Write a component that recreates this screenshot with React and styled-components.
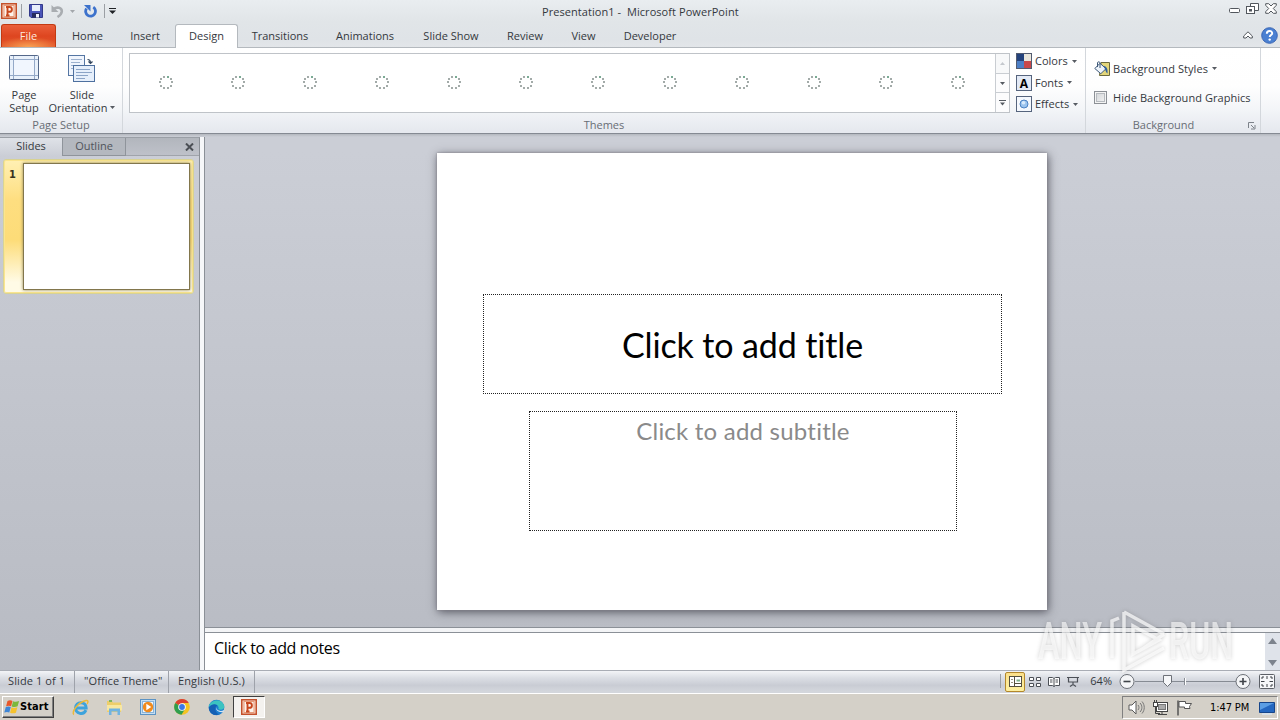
import React from 'react'
import styled, { createGlobalStyle, css } from 'styled-components'

const GlobalStyle = createGlobalStyle`
  * {
    box-sizing: border-box;
  }
  body {
    margin: 0;
    overflow: hidden;
    font-family: 'Open Sans', 'Noto Sans', sans-serif;
    font-size: 11px;
    color: #34383d;
  }
  svg {
    display: block;
    flex: none;
  }
`

const Window = styled.div`
  position: relative;
  width: 1280px;
  height: 720px;
  display: flex;
  flex-direction: column;
  overflow: hidden;
`

const Label = styled.span`
  white-space: pre;
  line-height: 14px;
`

/* ---------- header ---------- */
const Header = styled.header`
  height: 48px;
  flex: none;
  background: linear-gradient(#e9edf0 0%, #e1e5e8 45%, #dfe3e7 85%, #e3e6e9 100%);
  border-bottom: 1px solid #b4b9be;
`

const TitleBar = styled.div`
  height: 24px;
  display: grid;
  grid-template-columns: 542px 1fr auto;
`

const QuickAccess = styled.div`
  display: flex;
  align-items: center;
  height: 22px;
  padding-left: 1px;
`

const TitleText = styled(Label)`
  padding-top: 5px;
  letter-spacing: 0.06px;
`

const WindowButtons = styled.div`
  display: flex;
  gap: 6px;
  padding: 3px 3px 0 0;
`

const TabBar = styled.nav`
  height: 24px;
  display: flex;
  align-items: stretch;
  padding-left: 1px;
`

const Tab = styled.div`
  width: ${(p) => p.$w}px;
  height: 23px;
  padding-top: 5px;
  display: flex;
  justify-content: center;
  ${(p) =>
    p.$file &&
    css`
      color: #ffe9df;
      border: 1px solid #c23a12;
      border-bottom: 0;
      border-radius: 3px 3px 0 0;
      padding-top: 4px;
      background: radial-gradient(ellipse 32px 10px at 50% 100%, #f9a254 0%, rgba(249, 140, 70, 0) 100%),
        linear-gradient(#ea5f3a, #de4620 50%, #e2572c);
    `}
  ${(p) =>
    p.$active &&
    css`
      height: 24px;
      margin-left: 4px;
      padding-top: 4px;
      background: #fff;
      border: 1px solid #b4b9be;
      border-bottom: 0;
      border-radius: 3px 3px 0 0;
    `}
`

const TabTools = styled.div`
  display: flex;
  align-items: center;
  gap: 8px;
  margin-left: auto;
  padding: 0 2px 2px 0;
`

/* ---------- ribbon ---------- */
const Ribbon = styled.section`
  height: 86px;
  flex: none;
  display: flex;
  background: linear-gradient(#fff 0%, #fefefe 45%, #f3f5f8 72%, #e6e9ef 97%);
  border-bottom: 1px solid #858a93;
`

const Group = styled.div`
  width: ${(p) => p.$w}px;
  display: flex;
  flex-direction: column;
  border-right: 1px solid #d3d7dc;
`

const GroupBody = styled.div`
  height: 70px;
  display: flex;
`

const GroupTitle = styled.div`
  position: relative;
  height: 15px;
  display: flex;
  justify-content: center;
  padding-right: ${(p) => p.$pr || 0}px;
  color: #686d75;
`

const Launcher = styled.svg`
  position: absolute;
  right: 4px;
  top: 4px;
`

const BigButton = styled.div`
  width: ${(p) => p.$w}px;
  padding-top: 5px;
  display: flex;
  flex-direction: column;
  align-items: center;

  svg {
    margin-bottom: 6px;
  }
  span {
    line-height: 13px;
  }
`

const WithArrow = styled.div`
  display: flex;
  align-items: center;
  gap: ${(p) => p.$gap || 4}px;

  svg {
    margin: 0;
  }
`

const Gallery = styled.div`
  width: 881px;
  height: 60px;
  margin: 5px 0 0 6px;
  display: flex;
  background: #fff;
  border: 1px solid #bfc3c8;
`

const Themes = styled.div`
  flex: 1;
  display: flex;
  align-items: center;
`

const ThemeSlot = styled.div`
  width: 72px;
  display: flex;
  justify-content: center;
`

const GalleryScroll = styled.div`
  width: 14px;
  display: flex;
  flex-direction: column;
  border-left: 1px solid #c9cdd2;
`

const ScrollCell = styled.div`
  flex: 1;
  display: flex;
  align-items: center;
  justify-content: center;
  background: ${(p) => (p.$dim ? '#f7f8f9' : '#fcfcfd')};

  & + & {
    border-top: 1px solid #c9cdd2;
  }
`

const SmallList = styled.div`
  display: flex;
  flex-direction: column;
  padding: 5px 0 0 6px;
`

const SmallButton = styled.div`
  height: 22px;
  display: flex;
  align-items: flex-start;
  gap: 3px;

  ${WithArrow} {
    height: 16px;
  }
`

const BackgroundList = styled.div`
  padding: 13px 0 0 8px;
  display: flex;
  flex-direction: column;
  gap: 14px;
`

const BackgroundRow = styled.div`
  display: flex;
  align-items: center;
  height: 15px;
  gap: ${(p) => p.$gap}px;
  letter-spacing: 0.05px;
`

const CheckBox = styled.div`
  width: 13px;
  height: 13px;
  background: linear-gradient(135deg, #cfd2d6, #f6f6f6);
  border: 1px solid #8c9096;
  box-shadow: inset 0 0 0 1px #f4f4f4, inset 0 0 0 2px #b6babf;
`

/* ---------- workspace ---------- */
const Workspace = styled.main`
  height: 536px;
  flex: none;
  display: flex;
  padding-top: 3px;
  background: linear-gradient(#b4b8bf, #cbced6 3px, #cbced6 18px, #b8bbc3);
`

const SidePane = styled.aside`
  width: 200px;
  border-top: 1px solid #9a9fa6;
  border-right: 1px solid #8b9097;
`

const PaneTabs = styled.div`
  height: 18px;
  display: flex;
`

const PaneTab = styled.div`
  width: ${(p) => p.$w}px;
  height: 18px;
  display: flex;
  justify-content: center;
  padding-top: 1px;
  ${(p) =>
    p.$active
      ? css`
          background: linear-gradient(#dfe2e8, #cbced6);
        `
      : css`
          color: #50545b;
          background: #b4b8bf;
          border: 1px solid #8f949b;
          border-top: 0;
        `}
`

const PaneRest = styled.div`
  flex: 1;
  display: flex;
  justify-content: flex-end;
  align-items: center;
  padding-right: 5px;
  background: linear-gradient(#b2b6bd, #bec1c9);
  border-bottom: 1px solid #a0a4ab;
`

const ThumbRow = styled.div`
  width: 191px;
  height: 135px;
  margin: 3px 0 0 3px;
  display: flex;
  border: 1px solid #d9d394;
  border-radius: 3px;
  box-shadow: inset 0 0 0 1px #fbe58e;
  background: linear-gradient(#fff0b4 0%, #fede80 30%, #fddc78 60%, #fffbe6 92%);
`

const ThumbNumber = styled.b`
  width: 19px;
  padding: 7px 0 0 5px;
  font: bold 11px/15px 'DejaVu Sans Condensed', sans-serif;
  font-stretch: condensed;
  color: #38321d;
`

const Thumb = styled.div`
  width: 167px;
  height: 127px;
  margin-top: 3px;
  background: #fff;
  border: 1px solid #82764c;
  box-shadow: 0 0 3px #8d8251;
`

const Splitter = styled.div`
  width: 5px;
  background: #f6f7f9;
  border-right: 1px solid #8b9097;
`

const Editor = styled.div`
  flex: 1;
  display: flex;
  flex-direction: column;
`

const Stage = styled.div`
  height: 491px;
  padding: 16px 0 0 232px;
  border-bottom: 1px solid #8b9097;
`

const Slide = styled.div`
  width: 610px;
  height: 457px;
  padding-top: 141px;
  background: #fff;
  box-shadow: 0 0 2px #85838c, 1px 2px 9px rgba(50, 50, 60, 0.75);
  font-family: Lato, Carlito, sans-serif;
  font-variant-ligatures: none;
`

const Placeholder = styled.div`
  display: flex;
  justify-content: center;
  border: 1px dotted #222;
  white-space: pre;
`

const TitleBox = styled(Placeholder)`
  width: 519px;
  height: 100px;
  margin-left: 46px;
  align-items: center;
  font-size: 34px;
  letter-spacing: -0.13px;
  color: #000;
`

const SubtitleBox = styled(Placeholder)`
  width: 428px;
  height: 120px;
  margin: 17px 0 0 92px;
  padding-top: 4px;
  font-size: 24px;
  line-height: 30px;
  letter-spacing: 0.22px;
  color: #8a8a8a;
`

const NotesRow = styled.div`
  flex: 1;
  display: flex;
  margin-top: 4px;
  background: #fff;
  border-top: 1px solid #8b9097;
  box-shadow: 0 -4px 0 #f3f4f6;
`

const Notes = styled.div`
  flex: 1;
  padding: 4px 0 0 9px;
  font-size: 16px;
  line-height: 22px;
  letter-spacing: -0.36px;
  color: #000;
`

const NotesScroll = styled.div`
  width: 15px;
  display: flex;
  flex-direction: column;
  justify-content: space-between;
  align-items: center;
  padding: 5px 0 4px;
  background: #dfe3ea;
`

/* ---------- status bar ---------- */
const StatusBar = styled.footer`
  height: 23px;
  flex: none;
  display: flex;
  align-items: stretch;
  background: linear-gradient(#f3f4f7 0%, #dcdfe5 30%, #c9ccd4 65%, #d3d6dc 92%);
  border-top: 1px solid #a9adb5;
`

const StatusCell = styled.div`
  width: ${(p) => p.$w}px;
  padding: 2px 0 0 ${(p) => p.$pl}px;
  border-right: 1px solid #9ea2aa;
  letter-spacing: 0.1px;
`

const ViewTools = styled.div`
  display: flex;
  align-items: center;
  margin-left: auto;
  padding-right: 5px;
  padding-bottom: 2px;
`

const ViewButton = styled.div`
  width: 19px;
  height: 20px;
  display: flex;
  align-items: center;
  justify-content: center;
  ${(p) =>
    p.$active &&
    css`
      width: 20px;
      margin: 1px 0 0 4px;
      background: linear-gradient(#fbe08a, #fdf0a0);
      border: 1px solid #b3872b;
      border-radius: 2px;
    `}
`

/* ---------- taskbar ---------- */
const Taskbar = styled.div`
  flex: 1;
  display: flex;
  align-items: flex-start;
  background: #d4d0c8;
  border-top: 1px solid #fff;
  font-family: 'DejaVu Sans Condensed', 'DejaVu Sans', sans-serif;
  font-stretch: condensed;
  color: #000;
`

const StartButton = styled.div`
  width: 52px;
  height: 22px;
  margin: 2px 9px 0 2px;
  display: flex;
  align-items: center;
  padding-left: 1px;
  font-weight: bold;
  letter-spacing: 0.1px;
  border: 1px solid #fff;
  border-right-color: #404040;
  border-bottom-color: #404040;
  box-shadow: inset -1px -1px #808080;
`

const TaskIcon = styled.div`
  width: ${(p) => (p.$active ? 32 : 34)}px;
  height: 22px;
  margin-top: 2px;
  display: flex;
  align-items: center;
  justify-content: center;
  ${(p) =>
    p.$active &&
    css`
      background: #f4f2ef;
      border: 1px solid #404040;
      border-right-color: #fff;
      border-bottom-color: #fff;
    `}
`

const Tray = styled.div`
  width: 156px;
  height: 23px;
  margin: 2px 2px 0 auto;
  display: flex;
  align-items: center;
  padding-left: 5px;
  border: 1px solid #808080;
  border-right-color: #fff;
  border-bottom-color: #fff;

  span {
    width: 49px;
    margin-left: 17px;
    letter-spacing: -0.1px;
  }
`

const Watermark = styled.svg`
  position: absolute;
  left: 1032px;
  top: 604px;
  filter: drop-shadow(0 0 2px rgba(90, 90, 90, 0.45));
`

/* ---------- icons ---------- */
const Arrow = ({ color = '#565b62', up }) => (
  <svg width="5" height="3" viewBox="0 0 5 3">
    <path d={up ? 'M0 3h5L2.5 0z' : 'M0 0h5L2.5 3z'} fill={color} />
  </svg>
)

const PowerPointIcon = () => (
  <svg width="16" height="16" viewBox="0 0 16 16">
    <rect x="0.75" y="0.75" width="14.5" height="14.5" fill="#f7d9ca" stroke="#c4512b" strokeWidth="1.5" />
    <rect x="3" y="2.5" width="10" height="11" fill="#fdf3ec" stroke="#e79a78" />
    <path d="M5 12.500h3.500M6.500 12.500V4h2a2.300 2.300 0 0 1 0 4.800H6.500M5 4h2" fill="none" stroke="#c8471d" strokeWidth="1.900" />
  </svg>
)

const QatDivider = () => (
  <svg width="1" height="14">
    <path d="M.5 0v14" stroke="#9b9fa4" />
  </svg>
)

const SaveIcon = () => (
  <svg width="14" height="14" viewBox="0 0 14 14">
    <path d="M.5.5h13v13H2L.5 12z" fill="#4a55b8" stroke="#33398a" />
    <rect x="3" y="1" width="8" height="6" fill="#e8eefb" />
    <rect x="3" y="9" width="8" height="4.5" fill="#272c5e" />
    <rect x="7" y="10" width="3" height="3.5" fill="#f2f4fb" />
  </svg>
)

const UndoIcon = () => (
  <svg width="13" height="13" viewBox="0 0 13 13">
    <path d="M2.500 4C6 1.500 11 2.500 10.800 6.500c-.2 2.500-1.800 4-4.300 5.500" fill="none" stroke="#a9adb1" strokeWidth="2.600" />
    <path d="M.5 0v7h7z" fill="#a9adb1" />
  </svg>
)

const RepeatIcon = () => (
  <svg width="13" height="14" viewBox="0 0 13 14">
    <path d="M9.300 3.200A4.900 4.900 0 1 1 2.500 4.500" fill="none" stroke="#3d72cc" strokeWidth="2.800" />
    <path d="M0 1h6.500v6.500z" fill="#3d72cc" />
  </svg>
)

const WinIcons = () => (
  <WindowButtons>
    <svg width="12" height="12" viewBox="0 0 12 12">
      <rect x="1.500" y="5.500" width="10" height="4" rx="1" fill="#fff" stroke="#52575d" />
    </svg>
    <svg width="13" height="12" viewBox="0 0 13 12">
      <path d="M4.500 4V.5h8v7H9" fill="#fff" stroke="#52575d" />
      <rect x=".5" y="3.500" width="8" height="7" fill="#fff" stroke="#52575d" />
      <rect x="3.500" y="6.500" width="2" height="1.500" fill="none" stroke="#52575d" />
    </svg>
    <svg width="12" height="11" viewBox="0 0 12 11">
      <path d="M.7.7h3L6 3 8.300.7h3v1.600L8.300 5.500l3 3.200v1.600h-3L6 8l-2.300 2.300h-3V8.700l3-3.200-3-3.200z" fill="#fff" stroke="#52575d" />
    </svg>
  </WindowButtons>
)

const HelpIcon = () => (
  <svg width="17" height="17" viewBox="0 0 17 17">
    <circle cx="8.500" cy="8.500" r="7.800" fill="#4a80d2" stroke="#3a66b4" />
    <path d="M5.800 6.700c0-3.600 5.600-3.400 5.400-.3-.1 1.600-2.500 1.700-2.500 3.600" fill="none" stroke="#fff" strokeWidth="1.900" />
    <circle cx="8.700" cy="12.600" r="1.200" fill="#fff" />
  </svg>
)

const PageSetupIcon = () => (
  <svg width="32" height="29" viewBox="0 0 32 29">
    <rect x="1.500" y="2.500" width="29" height="24" rx="1" fill="#e9f1fb" stroke="#54688a" />
    <rect x="6" y="6" width="20" height="17" fill="#f1f6fe" />
    <path d="M5.500 3v23M26.500 3v23M2 6.500h28M2 22.500h28" stroke="#94a9c8" />
  </svg>
)

const OrientationIcon = () => (
  <svg width="30" height="29" viewBox="0 0 30 29">
    <rect x="1.500" y="2.500" width="16" height="20" fill="#f0f5fd" stroke="#5576a3" />
    <path d="M4 6.500h11M4 9.500h9M4 12.500h6M4 15.500h3" stroke="#9db2cf" />
    <rect x="6.500" y="12.500" width="21" height="16" fill="#e6effb" stroke="#4e709f" />
    <path d="M9 16.500h14M9 19.500h16M9 22.500h12M9 25.500h9" stroke="#8ba4c7" />
    <path d="M20.500 6.500c2 0 3 1 3 3.500M21.500 8.500l2 2 2-2" fill="none" stroke="#32465f" strokeWidth="1.200" />
  </svg>
)

const dots = [
  [4, 0], [8, 0], [1, 2], [11, 2], [0, 5], [12, 5], [1, 9], [11, 9], [4, 11], [8, 11],
]

const Spinner = () => (
  <svg width="14" height="14" viewBox="0 0 14 14">
    {dots.map(([x, y], i) => (
      <rect key={i} x={x} y={y} width="2" height="2" fill={i === 1 ? '#7aab94' : '#a3aba9'} />
    ))}
  </svg>
)

const ColorsIcon = () => (
  <svg width="16" height="16" viewBox="0 0 16 16">
    <path d="M0 0h8v8H0z" fill="#24427c" />
    <path d="M8 0h8v8H8z" fill="#e9e6dc" />
    <path d="M0 8h8v8H0z" fill="#4c7fc6" />
    <path d="M8 8h8v8H8z" fill="#c8484a" />
    <rect x=".5" y=".5" width="15" height="15" fill="none" stroke="#525b70" />
  </svg>
)

const FontsIcon = () => (
  <svg width="16" height="16" viewBox="0 0 16 16">
    <rect x=".5" y=".5" width="15" height="15" fill="#e3eaf6" stroke="#56647d" />
    <text x="8" y="12.500" textAnchor="middle" fontSize="12" fontWeight="bold" fontFamily="Open Sans" fill="#000">
      A
    </text>
  </svg>
)

const EffectsIcon = () => (
  <svg width="16" height="16" viewBox="0 0 16 16">
    <rect x=".5" y=".5" width="15" height="15" fill="#f5f8fd" stroke="#56647d" />
    <circle cx="8" cy="8" r="4" fill="#9cc4ee" stroke="#4c83c4" />
    <circle cx="7.500" cy="6.800" r="1.800" fill="#d9ebfc" />
  </svg>
)

const BucketIcon = () => (
  <svg width="16" height="15" viewBox="0 0 16 15">
    <path d="M7 1.500h8.500v13H5.500z" fill="#e3d67a" stroke="#6b6a3e" />
    <path d="M.8 7.500L6 2.300l6 5.400-5.200 5z" fill="#eef4fb" stroke="#3d5878" />
    <path d="M3.500 6V1.800c0-1.300 2.500-1.300 2.500 0V7" fill="none" stroke="#3d5878" />
    <path d="M9.500 5c3 .3 4.500 2.500 4 7.500-1.300-1-1.800-2.500-2.500-4.500z" fill="#2f5f9e" />
  </svg>
)

const CloseIcon = () => (
  <svg width="9" height="8" viewBox="0 0 9 8">
    <path d="M1 .5l7 7M8 .5l-7 7" stroke="#4b4f55" strokeWidth="2" />
  </svg>
)

const NormalViewIcon = () => (
  <svg width="13" height="11" viewBox="0 0 13 11">
    <rect x=".5" y=".5" width="12" height="10" fill="#fff" stroke="#55503f" />
    <path d="M5.500 1v9M6 7.500h6" stroke="#55503f" />
    <path d="M2 3.500h2M2 6.500h2" stroke="#9a9580" />
    <path d="M7.500 4.500h3.500" stroke="#7fb08a" strokeWidth="2" />
  </svg>
)

const SorterIcon = () => (
  <svg width="12" height="11" viewBox="0 0 12 11">
    <path d="M.5 1.500h4v3h-4zM7.500 1.500h4v3h-4zM.5 7.500h4v3h-4zM7.500 7.500h4v3h-4z" fill="#fff" stroke="#4c5057" />
  </svg>
)

const ReadingIcon = () => (
  <svg width="12" height="11" viewBox="0 0 12 11">
    <path d="M.5 1.500h4l1.500 1 1.500-1h4v8h-4l-1.500 1-1.500-1h-4z" fill="#fff" stroke="#4c5057" />
    <path d="M6 2.500v8M2 4h2.500M2 6h2.500M7.500 4H10M7.500 6H10" stroke="#4c5057" />
  </svg>
)

const ShowIcon = () => (
  <svg width="12" height="11" viewBox="0 0 12 11">
    <path d="M0 1.500h12M1.500 2v4h9V2M6 6v3M3 10.500l3-2 3 2" fill="none" stroke="#4c5057" strokeWidth="1.200" />
  </svg>
)

const ZoomSlider = () => (
  <svg width="132" height="17" viewBox="0 0 132 17">
    <path d="M16 8.500h101" stroke="#868b93" />
    <path d="M65.500 5v7" stroke="#868b93" />
    <path d="M66.500 5v7" stroke="#fff" />
    <circle cx="8" cy="8.500" r="7" fill="#f4f5f7" stroke="#6d7178" />
    <path d="M4.500 8.500h7" stroke="#3f4349" strokeWidth="1.600" />
    <circle cx="124" cy="8.500" r="7" fill="#f4f5f7" stroke="#6d7178" />
    <path d="M120.500 8.500h7M124 5v7" stroke="#3f4349" strokeWidth="1.600" />
    <path d="M44.500 2.500h8v7l-4 4-4-4z" fill="#f6f7f9" stroke="#6d7178" />
  </svg>
)

const FitIcon = () => (
  <svg width="16" height="15" viewBox="0 0 16 15">
    <rect x=".5" y=".5" width="15" height="14" rx="1" fill="#f6f7f9" stroke="#5c6067" />
    <path d="M8 2v3M8 10v3M2 7.500h3.500M10.500 7.500H14M3 5V3h2M11 3h2v2M13 10v2h-2M5 12H3v-2" fill="none" stroke="#3f4349" />
  </svg>
)

const WindowsFlag = () => (
  <svg width="16" height="16" viewBox="0 0 16 16">
    <path d="M3.500 2c2-1 3.500-.8 5 0L7.100 7.300c-1.500-.8-3-.8-5 0z" fill="#e8582a" />
    <path d="M9.100 2.200c1.700.8 3.500.8 6-.2l-1.500 5.300c-2 .9-4 .9-5.900.1z" fill="#7cb83c" />
    <path d="M1.800 8.100c2-.8 3.500-.8 5 0L5.300 13.500c-1.500-.8-3-.8-5 0z" fill="#3f86d6" />
    <path d="M7.500 8.300c1.700.8 3.500.8 5.900-.1l-1.500 5.500c-2 .9-4 .8-5.800 0z" fill="#f6c22d" />
  </svg>
)

const IeIcon = () => (
  <svg width="17" height="17" viewBox="0 0 17 17">
    <path d="M14 11.200c-2.500 5.500-10.500 3.600-10.500-2.400 0-6.300 10.500-7.200 10.700.2H5" fill="none" stroke="#3da3dc" strokeWidth="2.900" />
    <path d="M2 15.500C-1 14 5 3.500 14 1.500c2.500-.4 2.300 1.500 1 3.500" fill="none" stroke="#eab93a" strokeWidth="1.500" />
  </svg>
)

const FolderIcon = () => (
  <svg width="17" height="16" viewBox="0 0 17 16">
    <path d="M1 2h5l1 1.500h8V13H1z" fill="#edce6a" />
    <path d="M3 1h3v2H3z" fill="#7fb45c" />
    <path d="M1 6h15v5.500H1z" fill="#f8e7a0" />
    <path d="M3 16V9.500h11V16h-2.500v-3.500h-6V16z" fill="#6fb3e2" />
  </svg>
)

const PlayerIcon = () => (
  <svg width="16" height="16" viewBox="0 0 16 16">
    <rect x=".5" y=".5" width="15" height="15" fill="#c5def2" stroke="#5b93c4" />
    <rect x="2.500" y="2.500" width="11" height="11" fill="#eef6fc" stroke="#8ab4d8" />
    <circle cx="8" cy="8" r="5.200" fill="#f08a1c" />
    <path d="M6.300 4.800v6.400L11.300 8z" fill="#fff" />
  </svg>
)

const ChromeIcon = () => (
  <svg width="16" height="16" viewBox="0 0 16 16">
    <circle cx="8" cy="8" r="7.800" fill="#f4c322" />
    <path d="M8 8L1.200 4.100A7.800 7.800 0 0 1 14.800 4.100H8z" fill="#dc4132" />
    <path d="M1.200 4.100A7.800 7.800 0 0 0 7.500 15.800L11 10z" fill="#2f9e4f" />
    <circle cx="8" cy="8" r="3.800" fill="#fff" />
    <circle cx="8" cy="8" r="2.900" fill="#3b78e7" />
  </svg>
)

const EdgeIcon = () => (
  <svg width="17" height="17" viewBox="0 0 17 17">
    <circle cx="8.500" cy="8.500" r="7.800" fill="#1c7ed0" />
    <path d="M.8 8C1.500 0 15.500-1 16.300 7.800c0 3-4 3.500-6 2.200C12 6 6 3 .8 8z" fill="#3cc3c0" />
    <path d="M.8 8.500C4 4 9 5 9.500 7c-3 0-3.500 5.500 1.500 8.500C5 17.500.5 13 .8 8.500z" fill="#1560b4" />
    <path d="M8.500 8c-.5 3 3.500 5 7.200 3.200.3-.1 1 .5-.2 1.600C12 14 7 12 8.500 8z" fill="#d4e6f4" />
  </svg>
)

const SpeakerIcon = () => (
  <svg width="17" height="15" viewBox="0 0 17 15">
    <path d="M1 5h3l4-4v13l-4-4H1z" fill="#fff" stroke="#5a5a5a" />
    <path d="M10 5c1.300 1.500 1.300 3.500 0 5M12 3c2.500 2.500 2.500 6.500 0 9M14 1.500c3 3.500 3 8.500 0 12" fill="none" stroke="#777" />
  </svg>
)

const NetworkIcon = () => (
  <svg width="17" height="16" viewBox="0 0 17 16">
    <rect x="4.500" y="2.500" width="11" height="9" fill="#fff" stroke="#444" />
    <rect x="6.500" y="4.500" width="7" height="5" fill="#aaa" stroke="#777" />
    <path d="M10 12v2M6 14.500h9" stroke="#444" />
    <rect x="1.500" y="2.500" width="4" height="4" fill="#fff" stroke="#444" />
    <path d="M2.500 0v2.500M4.500 0v2.500M3.500 7v6.500H8" fill="none" stroke="#444" />
  </svg>
)

const FlagIcon = () => (
  <svg width="17" height="16" viewBox="0 0 17 16">
    <path d="M2 .5v15" stroke="#555" strokeWidth="1.500" />
    <path d="M3 1.500h6.500v2h6l-2 3 .5 2H8.500v-1.500H3z" fill="#fff" stroke="#555" />
  </svg>
)

const DesktopIcon = () => (
  <svg width="16" height="14" viewBox="0 0 16 14">
    <path d="M.5 1.500h15v10H.5z" fill="#2467c0" stroke="#16458a" />
    <path d="M1 2h14L1 9z" fill="#5b9ee4" />
    <path d="M3 13h10" stroke="#d9e4f0" strokeWidth="1.500" />
  </svg>
)

const tabs = [
  { name: 'Home', w: 63 },
  { name: 'Insert', w: 52 },
  { name: 'Design', w: 63, active: true },
  { name: 'Transitions', w: 84 },
  { name: 'Animations', w: 86 },
  { name: 'Slide Show', w: 86 },
  { name: 'Review', w: 62 },
  { name: 'View', w: 55 },
  { name: 'Developer', w: 78 },
]

const themes = Array.from({ length: 12 }, (_, i) => i)

const App = () => {
  return (
    <Window>
      <GlobalStyle />
      <Header>
        <TitleBar>
          <QuickAccess>
            <PowerPointIcon />
            <svg width="4" height="1" />
            <QatDivider />
            <svg width="7" height="1" />
            <SaveIcon />
            <svg width="8" height="1" />
            <UndoIcon />
            <svg width="6" height="1" />
            <Arrow color="#a3a7ab" />
            <svg width="9" height="1" />
            <RepeatIcon />
            <svg width="7" height="1" />
            <QatDivider />
            <svg width="4" height="1" />
            <svg width="7" height="6" viewBox="0 0 7 6">
              <path d="M0 .5h7" stroke="#1f2226" />
              <path d="M0 2.500h7L3.500 6z" fill="#1f2226" />
            </svg>
          </QuickAccess>
          <TitleText>Presentation1 -  Microsoft PowerPoint</TitleText>
          <WinIcons />
        </TitleBar>
        <TabBar>
          <Tab $w={55} $file>
            <Label>File</Label>
          </Tab>
          {tabs.map((tab) => (
            <Tab key={tab.name} $w={tab.w} $active={tab.active}>
              <Label>{tab.name}</Label>
            </Tab>
          ))}
          <TabTools>
            <svg width="10" height="8" viewBox="0 0 10 8">
              <path d="M.7 5L5 .8 9.300 5v2H7L5 5 3 7H.7z" fill="#fff" stroke="#52575d" />
            </svg>
            <HelpIcon />
          </TabTools>
        </TabBar>
      </Header>

      <Ribbon>
        <Group $w={123}>
          <GroupBody>
            <BigButton $w={48}>
              <PageSetupIcon />
              <Label>Page</Label>
              <Label>Setup</Label>
            </BigButton>
            <BigButton $w={68}>
              <OrientationIcon />
              <Label>Slide</Label>
              <WithArrow $gap={3}>
                <Label>Orientation</Label>
                <Arrow />
              </WithArrow>
            </BigButton>
          </GroupBody>
          <GroupTitle>
            <Label>Page Setup</Label>
          </GroupTitle>
        </Group>

        <Group $w={963}>
          <GroupBody>
            <Gallery>
              <Themes>
                {themes.map((t) => (
                  <ThemeSlot key={t}>
                    <Spinner />
                  </ThemeSlot>
                ))}
              </Themes>
              <GalleryScroll>
                <ScrollCell $dim>
                  <Arrow up color="#c4c8cd" />
                </ScrollCell>
                <ScrollCell>
                  <Arrow />
                </ScrollCell>
                <ScrollCell>
                  <svg width="7" height="6" viewBox="0 0 7 6">
                    <path d="M0 .5h7" stroke="#565b62" />
                    <path d="M1 2.500h5L3.500 5.500z" fill="#565b62" />
                  </svg>
                </ScrollCell>
              </GalleryScroll>
            </Gallery>
            <SmallList>
              <SmallButton>
                <ColorsIcon />
                <WithArrow>
                  <Label>Colors</Label>
                  <Arrow />
                </WithArrow>
              </SmallButton>
              <SmallButton>
                <FontsIcon />
                <WithArrow>
                  <Label>Fonts</Label>
                  <Arrow />
                </WithArrow>
              </SmallButton>
              <SmallButton>
                <EffectsIcon />
                <WithArrow>
                  <Label>Effects</Label>
                  <Arrow />
                </WithArrow>
              </SmallButton>
            </SmallList>
          </GroupBody>
          <GroupTitle>
            <Label>Themes</Label>
          </GroupTitle>
        </Group>

        <Group $w={175}>
          <GroupBody>
            <BackgroundList>
              <BackgroundRow $gap={3}>
                <BucketIcon />
                <WithArrow>
                  <Label>Background Styles</Label>
                  <Arrow />
                </WithArrow>
              </BackgroundRow>
              <BackgroundRow $gap={6}>
                <CheckBox />
                <Label>Hide Background Graphics</Label>
              </BackgroundRow>
            </BackgroundList>
          </GroupBody>
          <GroupTitle $pr={19}>
            <Label>Background</Label>
            <Launcher width="8" height="8" viewBox="0 0 8 8">
              <path d="M.5 6V.5H6M3 3l3 3M7 3v4H3" fill="none" stroke="#7d828a" />
            </Launcher>
          </GroupTitle>
        </Group>
      </Ribbon>

      <Workspace>
        <SidePane>
          <PaneTabs>
            <PaneTab $w={62} $active>
              <Label>Slides</Label>
            </PaneTab>
            <PaneTab $w={64}>
              <Label>Outline</Label>
            </PaneTab>
            <PaneRest>
              <CloseIcon />
            </PaneRest>
          </PaneTabs>
          <ThumbRow>
            <ThumbNumber>1</ThumbNumber>
            <Thumb />
          </ThumbRow>
        </SidePane>
        <Splitter />
        <Editor>
          <Stage>
            <Slide>
              <TitleBox>Click to add title</TitleBox>
              <SubtitleBox>Click to add subtitle</SubtitleBox>
            </Slide>
          </Stage>
          <NotesRow>
            <Notes>Click to add notes</Notes>
            <NotesScroll>
              <svg width="9" height="6" viewBox="0 0 9 6">
                <path d="M0 6h9L4.500 0z" fill="#7d838d" />
              </svg>
              <svg width="9" height="6" viewBox="0 0 9 6">
                <path d="M0 0h9L4.500 6z" fill="#7d838d" />
              </svg>
            </NotesScroll>
          </NotesRow>
        </Editor>
      </Workspace>

      <StatusBar>
        <StatusCell $w={75} $pl={8}>
          <Label>Slide 1 of 1</Label>
        </StatusCell>
        <StatusCell $w={94} $pl={9}>
          <Label>"Office Theme"</Label>
        </StatusCell>
        <StatusCell $w={86} $pl={9}>
          <Label>English (U.S.)</Label>
        </StatusCell>
        <ViewTools>
          <QatDivider />
          <ViewButton $active>
            <NormalViewIcon />
          </ViewButton>
          <ViewButton>
            <SorterIcon />
          </ViewButton>
          <ViewButton>
            <ReadingIcon />
          </ViewButton>
          <ViewButton>
            <ShowIcon />
          </ViewButton>
          <svg width="8" height="1" />
          <Label>64%</Label>
          <svg width="7" height="1" />
          <ZoomSlider />
          <svg width="8" height="1" />
          <FitIcon />
        </ViewTools>
      </StatusBar>

      <Taskbar>
        <StartButton>
          <WindowsFlag />
          <Label>Start</Label>
        </StartButton>
        <TaskIcon><IeIcon /></TaskIcon>
        <TaskIcon><FolderIcon /></TaskIcon>
        <TaskIcon><PlayerIcon /></TaskIcon>
        <TaskIcon><ChromeIcon /></TaskIcon>
        <TaskIcon><EdgeIcon /></TaskIcon>
        <TaskIcon $active><PowerPointIcon /></TaskIcon>
        <Tray>
          <SpeakerIcon />
          <svg width="7" height="1" />
          <NetworkIcon />
          <svg width="7" height="1" />
          <FlagIcon />
          <Label>1:47 PM</Label>
          <DesktopIcon />
        </Tray>
      </Taskbar>

      <Watermark width="240" height="76" viewBox="0 0 240 76" fill="rgba(255,255,255,0.62)" fontFamily="Roboto" fontSize="51" fontWeight="500">
        <text x="6" y="55" textLength="64" lengthAdjust="spacingAndGlyphs">ANY</text>
        <text x="137" y="55" textLength="64" lengthAdjust="spacingAndGlyphs">RUN</text>
        <g fill="none" stroke="rgba(255,255,255,0.7)" strokeWidth="3.5">
          <path d="M80 54V17l7-3M92 8v58l40-22M92 8l40 22M101 22v28l26-14zM132 30l-20 14" />
        </g>
      </Watermark>
    </Window>
  )
}

export default App
